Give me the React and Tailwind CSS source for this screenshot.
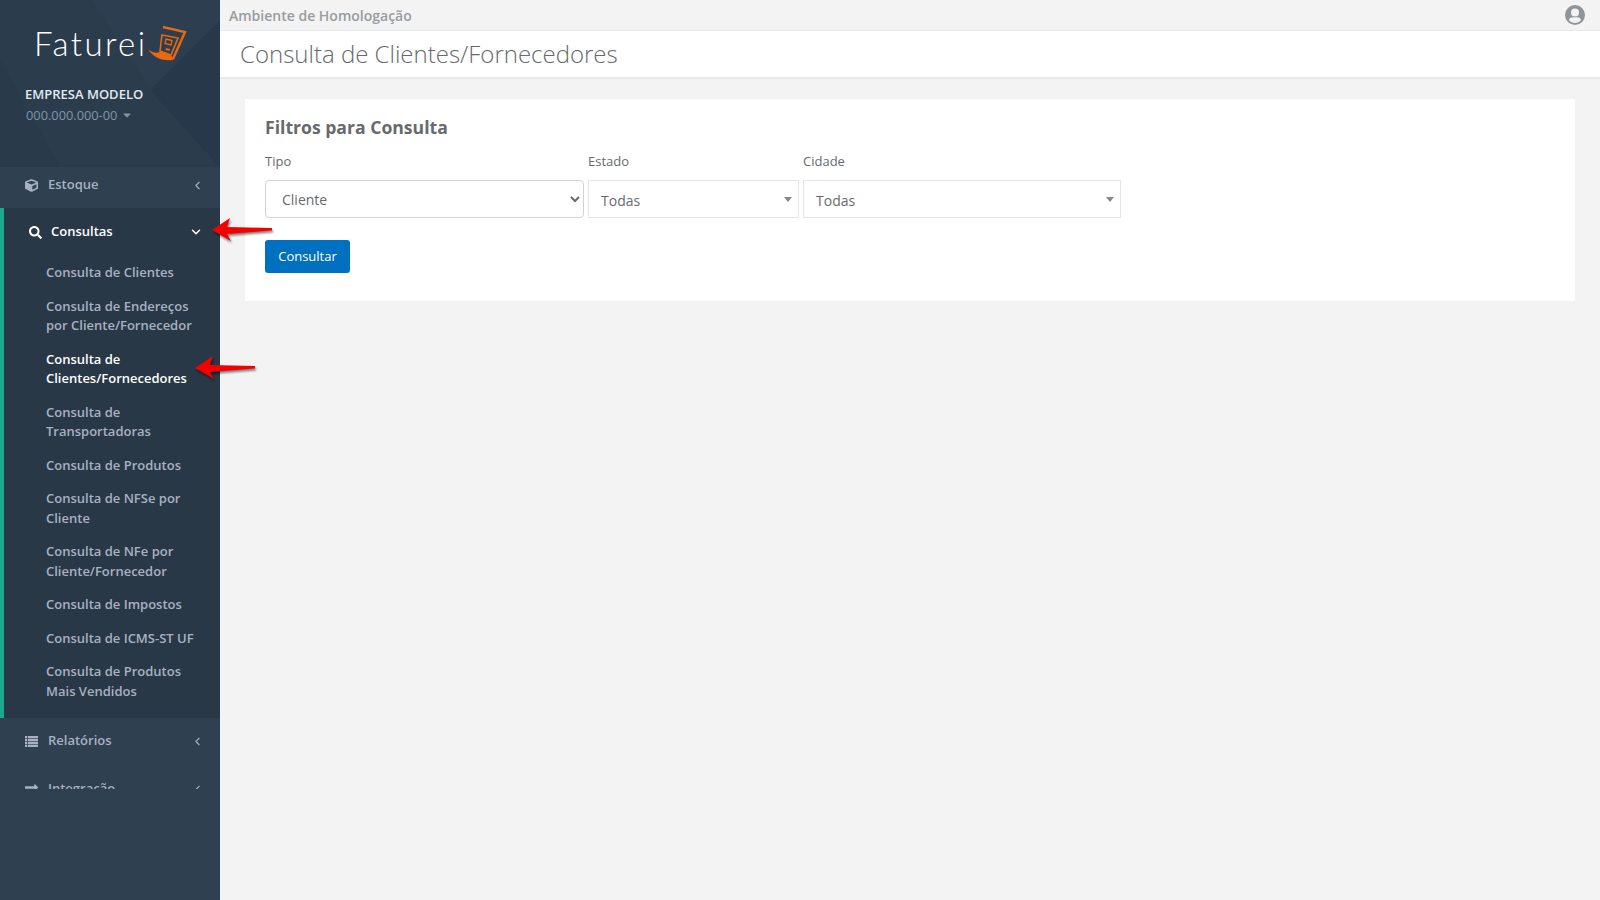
import { ChevronDown, ChevronLeft } from "lucide-react";
import { FaCaretDown, FaCube, FaLongArrowAltRight, FaSearch } from "react-icons/fa";

const font = { fontFamily: '"Open Sans", "Noto Sans", sans-serif' };

const subItems = [
  { label: ["Consulta de Clientes"] },
  { label: ["Consulta de Endereços", "por Cliente/Fornecedor"] },
  { label: ["Consulta de", "Clientes/Fornecedores"], active: true },
  { label: ["Consulta de", "Transportadoras"] },
  { label: ["Consulta de Produtos"] },
  { label: ["Consulta de NFSe por", "Cliente"] },
  { label: ["Consulta de NFe por", "Cliente/Fornecedor"] },
  { label: ["Consulta de Impostos"] },
  { label: ["Consulta de ICMS-ST UF"] },
  { label: ["Consulta de Produtos", "Mais Vendidos"] },
];

function LogoMark() {
  return (
    <svg width="40" height="36" viewBox="0 0 40 36" className="shrink-0">
      <path d="M16 1 L38 6 L26 33" fill="none" stroke="#e8690f" strokeWidth="2.4" />
      <path d="M15 9 L31 12 L24 29 L13 25 Z" fill="none" stroke="#e8690f" strokeWidth="1.6" />
      <path d="M19 13 L25 14.5 L24 19 L18 17.5 Z" fill="none" stroke="#e8690f" strokeWidth="1.3" />
      <path d="M19 22 L23 23 L22.5 25 L18.5 24 Z" fill="#e8690f" />
      <path d="M1 23 C6 28 12 27 14 25 L25 30 L26 34 C17 35 7 33 1 23 Z" fill="#e8690f" />
    </svg>
  );
}

function ListIcon({ className }) {
  return (
    <svg viewBox="0 0 13 11" className={className} fill="currentColor">
      {[0, 2.9, 5.8, 8.7].map((y) => (
        <g key={y}>
          <rect x="0" y={y} width="2" height="2.3" />
          <rect x="2.7" y={y} width="10.3" height="2.3" />
        </g>
      ))}
    </svg>
  );
}

function UserIcon() {
  return (
    <svg width="20" height="20" viewBox="0 0 20 20">
      <circle cx="10" cy="10" r="10" fill="#8f9499" />
      <circle cx="10" cy="7.5" r="4" fill="#f3f3f4" />
      <path d="M3.8 15 C5 12 7.5 11.8 10 12.4 C12.5 11.8 15 12 16.2 15 C14.6 17 12.4 18 10 18 C7.6 18 5.4 17 3.8 15 Z" fill="#f3f3f4" />
    </svg>
  );
}

function NavRow({ icon: Icon, label, height = "h-[46px]", iconClass = "h-[13px] w-[13px]" }) {
  return (
    <div className={`flex items-center text-[13px] font-semibold text-[#a7b1c2] ${height}`}>
      <Icon className={`ml-[25px] shrink-0 ${iconClass}`} />
      <span className="ml-[10px] flex-1">{label}</span>
      <ChevronLeft className="mr-[16px]" size={13} strokeWidth={2} />
    </div>
  );
}

function RedArrow({ className }) {
  return (
    <svg
      width="61"
      height="24"
      viewBox="0 0 61 24"
      className={`absolute z-10 drop-shadow-[1px_2px_1px_rgba(0,0,0,0.5)] ${className}`}
    >
      <path d="M0 12 L18 0 L15 9 L60 10 L60 12.5 L15 16 L19 23 Z" fill="#f40000" />
    </svg>
  );
}

function Sidebar() {
  return (
    <aside className="relative flex w-[220px] shrink-0 flex-col bg-[#2f4050]">
      <div className="relative h-[167px] overflow-hidden bg-[#293a4a]">
        <svg className="absolute inset-0" width="220" height="167" viewBox="0 0 220 167">
          <path d="M0 0 L90 0 L150 90 L220 167 L60 167 L0 60 Z" fill="#2b3d4d" />
          <path d="M150 90 L220 20 L220 167 Z" fill="#27384a" />
          <path d="M90 0 L220 0 L220 20 L150 90 Z" fill="#2c3e4f" />
        </svg>
        <div className="relative flex h-[62px] items-start pl-[34px] pt-[26px]">
          <span className="-mt-[1px] w-[113px] text-[33px] leading-[36px] font-light tracking-[2.4px] text-white [font-family:Lato,sans-serif]">
            Faturei
          </span>
          <LogoMark />
        </div>
        <p className="relative mt-[22px] pl-[25px] text-[13px] leading-[20px] font-semibold text-[#e4e9f0]">
          EMPRESA MODELO
        </p>
        <p className="relative flex items-center pl-[26px] pt-[1px] text-[12.8px] leading-[20px] text-[#8095a8]">
          000.000.000-00
          <FaCaretDown className="ml-[5px] h-[12px] w-[10px]" />
        </p>
      </div>

      <div className="h-[622px] overflow-hidden">
        <NavRow icon={FaCube} label="Estoque" height="h-[41px] pb-[5px]" />
        <div className="border-l-4 border-[#19aa8d] bg-[#293846] pb-[10px]">
          <div className="flex h-[48px] items-center text-[13px] font-semibold text-white">
            <FaSearch className="ml-[25px] h-[13px] w-[13px] shrink-0" />
            <span className="ml-[9px] flex-1">Consultas</span>
            <ChevronDown className="mr-[17px]" size={14} strokeWidth={2.5} />
          </div>
          {subItems.map((item) => (
            <a
              key={item.label.join(" ")}
              className={`block py-[7px] pl-[42px] text-[13px] leading-[19.5px] font-semibold ${
                item.active ? "text-white" : "text-[#a7b1c2]"
              }`}
            >
              {item.label.map((line) => (
                <span key={line} className="block whitespace-nowrap">
                  {line}
                </span>
              ))}
            </a>
          ))}
        </div>
        <NavRow icon={ListIcon} label="Relatórios" height="h-[48px] pb-[2px]" />
        <NavRow
          icon={FaLongArrowAltRight}
          label="Integração"
          iconClass="-mt-[4px] h-[15px] w-[13px]"
        />
      </div>
      <div className="flex-1" />
    </aside>
  );
}

function FakeSelect({ width, value }) {
  return (
    <div
      className={`flex h-[38px] items-center border border-[#e5e6e7] pl-[12px] pr-[6px] text-[14px] text-[#676a6c] ${width}`}
    >
      <span className="flex-1 pt-[2px]">{value}</span>
      <span className="h-0 w-0 border-x-[4px] border-t-[5px] border-x-transparent border-t-[#888]" />
    </div>
  );
}

export default function App() {
  return (
    <div className="relative flex min-h-[900px] bg-[#f3f3f4] text-[#676a6c]" style={font}>
      <Sidebar />
      <RedArrow className="left-[212px] top-[218px]" />
      <RedArrow className="left-[195px] top-[356px]" />

      <main className="flex min-w-0 flex-1 flex-col">
        <div className="flex h-[31px] items-center justify-between border-b border-[#e7eaec] pl-[9px] pr-[15px]">
          <span className="text-[14px] font-semibold text-[#999c9e]">Ambiente de Homologação</span>
          <UserIcon />
        </div>
        <div className="flex h-[48px] items-center border-b-2 border-[#e7eaec] bg-white pl-[20px]">
          <h1 className="text-[24px] font-light">Consulta de Clientes/Fornecedores</h1>
        </div>

        <section className="mx-[25px] mt-[20px] h-[202px] bg-white px-[20px] pt-[16px]">
          <h2 className="text-[17.6px] leading-[24px] font-bold">Filtros para Consulta</h2>
          <div className="mt-[3px] flex gap-[4px]">
            <div className="w-[319px]">
              <label className="block text-[13px] leading-[38px]">Tipo</label>
              <select className="h-[38px] w-full rounded-[4px] border border-[#ced4da] bg-white pl-[12px] text-[14px] text-[#676a6c]">
                <option>Cliente</option>
              </select>
            </div>
            <div>
              <label className="block text-[13px] leading-[38px]">Estado</label>
              <FakeSelect width="w-[211px]" value="Todas" />
            </div>
            <div>
              <label className="block text-[13px] leading-[38px]">Cidade</label>
              <FakeSelect width="w-[318px]" value="Todas" />
            </div>
          </div>
          <button className="mt-[22px] h-[33px] w-[85px] rounded-[3px] bg-[#0070c0] text-[13px] text-white">
            Consultar
          </button>
        </section>
      </main>
    </div>
  );
}
